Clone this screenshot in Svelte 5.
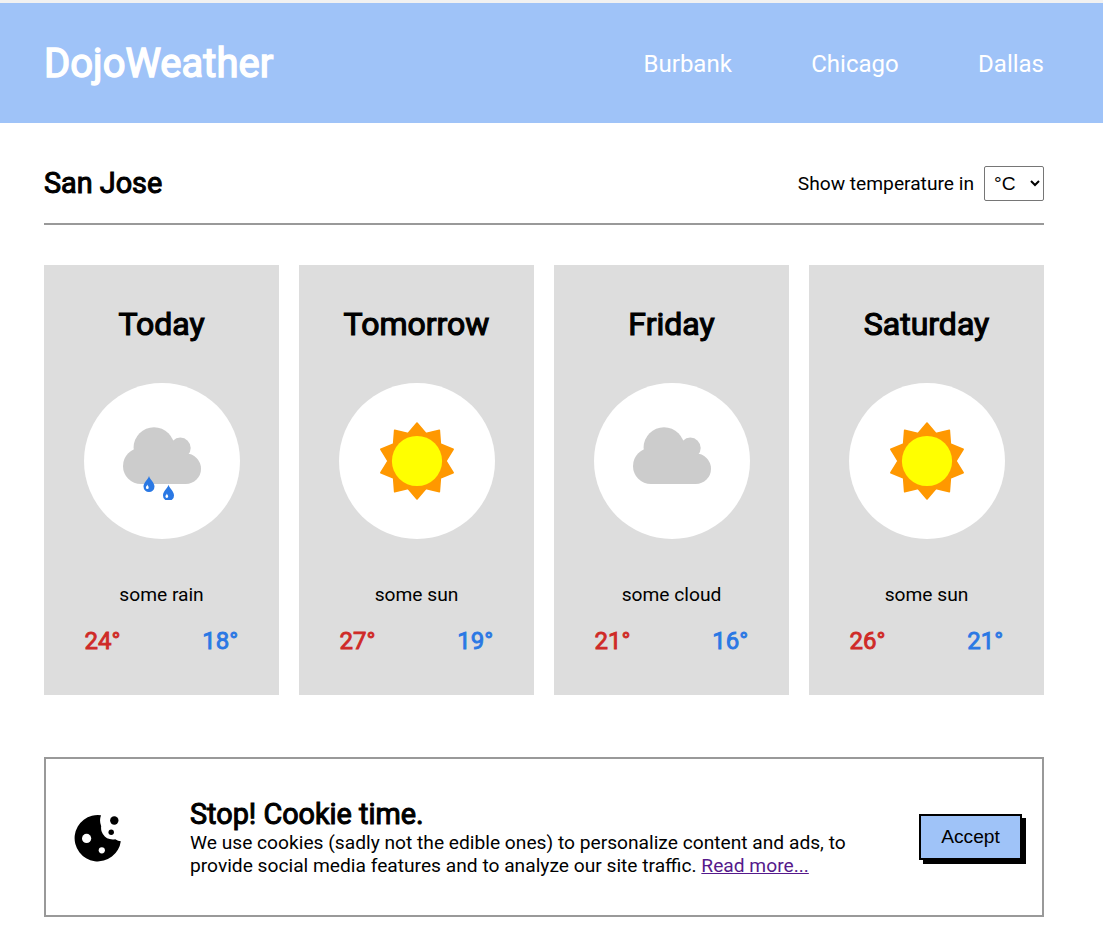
<script>
  const cities = ['Burbank', 'Chicago', 'Dallas'];
  const days = [
    { name: 'Today', icon: 'rain', text: 'some rain', high: 24, low: 18 },
    { name: 'Tomorrow', icon: 'sun', text: 'some sun', high: 27, low: 19 },
    { name: 'Friday', icon: 'cloud', text: 'some cloud', high: 21, low: 16 },
    { name: 'Saturday', icon: 'sun', text: 'some sun', high: 26, low: 21 }
  ];
  let unit = $state('C');
  const show = (c) => (unit === 'C' ? c : Math.round((c * 9) / 5 + 32));

  const rays = Array.from({ length: 20 }, (_, i) => {
    const r = i % 2 ? 28.9 : 38;
    const a = (i * Math.PI) / 10;
    return `${(39 + r * Math.sin(a)).toFixed(2)},${(39 - r * Math.cos(a)).toFixed(2)}`;
  }).join(' ');
</script>

<header>
  <h1>DojoWeather</h1>
  <nav>
    {#each cities as city}<a href="#{city}">{city}</a>{/each}
  </nav>
</header>

<main>
  <div class="place">
    <h2>San Jose</h2>
    <label>
      <span>Show temperature in</span>
      <select bind:value={unit}>
        <option value="C">°C</option>
        <option value="F">°F</option>
      </select>
    </label>
  </div>

  <section class="days">
    {#each days as day}
      <article>
        <h3>{day.name}</h3>
        <div class="disc">
          <svg width="78" height="78" viewBox="0 0 78 78">
            {#if day.icon === 'sun'}
              <polygon points={rays} fill="#ff9800" stroke="#ff9800" stroke-width="1.6" stroke-linejoin="round" />
              <circle cx="39" cy="39" r="25.1" fill="#ff0" />
            {:else}
              <g fill="#ccc">
                <circle cx="18" cy="44" r="18" />
                <circle cx="31" cy="25.6" r="20.4" />
                <circle cx="57.3" cy="26" r="10.4" />
                <circle cx="62.7" cy="46.7" r="15.3" />
                <rect x="18" y="25" width="44.7" height="37" />
              </g>
              {#if day.icon === 'rain'}
                {#each [[26, 54], [45.5, 62.8]] as [x, y]}
                  <g transform="translate({x} {y})">
                    <path fill="#2a78e4" d="M0 0C.8 3.6 5.5 6.3 5.5 10.6A5.5 5.5 0 0 1-5.5 10.6C-5.5 6.3-.8 3.6 0 0Z" />
                    <path fill="#fff" d="M-1.6 8.6C-1.3 10-.3 10.4-.3 11.7A1.4 1.4 0 0 1-3.1 11.7C-3.1 10.4-1.9 10-1.6 8.6Z" />
                  </g>
                {/each}
              {/if}
            {/if}
          </svg>
        </div>
        <p>{day.text}</p>
        <div class="temps">
          <span class="high">{show(day.high)}°</span>
          <span class="low">{show(day.low)}°</span>
        </div>
      </article>
    {/each}
  </section>

  <section class="cookie">
    <svg width="48" height="48" viewBox="0 0 48 48">
      <path d="M27 1.2A23.2 23.2 0 1 0 46.8 27.2Q44 27.2 41.3 25.2A11.6 11.6 0 0 1 27.2 12.2Q25 7 27 1.2Z" />
      <circle cx="12.6" cy="24.4" r="4.6" fill="#fff" />
      <circle cx="27.8" cy="36.3" r="3.1" fill="#fff" />
      <circle cx="40.3" cy="6.5" r="4.2" />
      <circle cx="37.2" cy="18.3" r="2.7" />
    </svg>
    <div class="message">
      <h2>Stop! Cookie time.</h2>
      <p>We use cookies (sadly not the edible ones) to personalize content and ads, to provide social media features and to analyze our site traffic. <a href="#more">Read more...</a></p>
    </div>
    <button>Accept</button>
  </section>
</main>

<style>
  :global(body) {
    background: #fff;
    font: 19.2px Roboto, sans-serif;
    color: #000;
  }
  h1, h2, h3, p { margin: 0; }
  h1, h2, h3, .temps {
    font-weight: 400;
    -webkit-text-stroke: 0.036em currentColor;
  }
  header {
    box-sizing: border-box;
    height: 123px;
    border-top: 3px solid #f1f1f1;
    padding: 1px 59px 0 44px;
    display: flex;
    align-items: center;
    justify-content: space-between;
    background: #9fc3f8;
    color: #fff;
  }
  h1 { font-size: 40px; }
  nav { display: flex; gap: 79.4px; font-size: 24px; padding-top: 1px; }
  nav a { color: inherit; text-decoration: none; }
  main { width: 1000px; margin-left: 44px; }
  .place {
    display: flex;
    align-items: center;
    justify-content: space-between;
    box-sizing: border-box;
    height: 102px;
    padding-top: 20px;
    border-bottom: 2px solid #999;
  }
  h2 { font-size: 28.8px; line-height: 34px; }
  label { display: flex; align-items: center; gap: 10px; }
  select {
    width: 60px;
    height: 35px;
    padding: 0 0 0 5px;
    border: 1px solid #767676;
    border-radius: 2px;
    background: #fff;
    color: #000;
    font: 19.2px "Liberation Sans", Arial, sans-serif;
  }
  .days {
    display: grid;
    grid-template-columns: repeat(4, minmax(0, 1fr));
    gap: 20px;
    margin-top: 40px;
  }
  article {
    box-sizing: border-box;
    height: 430px;
    padding: 40px 40px 0;
    background: #ddd;
    text-align: center;
  }
  h3 { font-size: 32px; line-height: 38px; }
  .disc {
    width: 156px;
    height: 156px;
    margin: 40px 0;
    border-radius: 50%;
    background: #fff;
    display: grid;
    place-items: center;
  }
  .days p { line-height: 31px; }
  .temps {
    display: flex;
    justify-content: space-between;
    margin-top: 17px;
    padding: 0 .8px 0 .5px;
    font-size: 24px;
    line-height: 29px;
  }
  .high { color: #cf2a27; }
  .low { color: #2a78e4; }
  .cookie {
    box-sizing: border-box;
    height: 160px;
    margin-top: 62px;
    border: 2px solid #999;
    padding: 0 20px 0 28px;
    display: flex;
    align-items: center;
  }
  .cookie svg { margin-top: 2px; }
  .message { width: 680px; margin: 0 auto 0 68px; }
  .message p { line-height: 23px; }
  .message a { color: #551a8b; }
  button {
    width: 103px;
    height: 46px;
    padding: 0;
    border: 2px solid #000;
    background: #9fc3f8;
    box-shadow: 4px 4px 0 #000;
    color: #000;
    font: 19.2px "Liberation Sans", Arial, sans-serif;
  }
</style>
